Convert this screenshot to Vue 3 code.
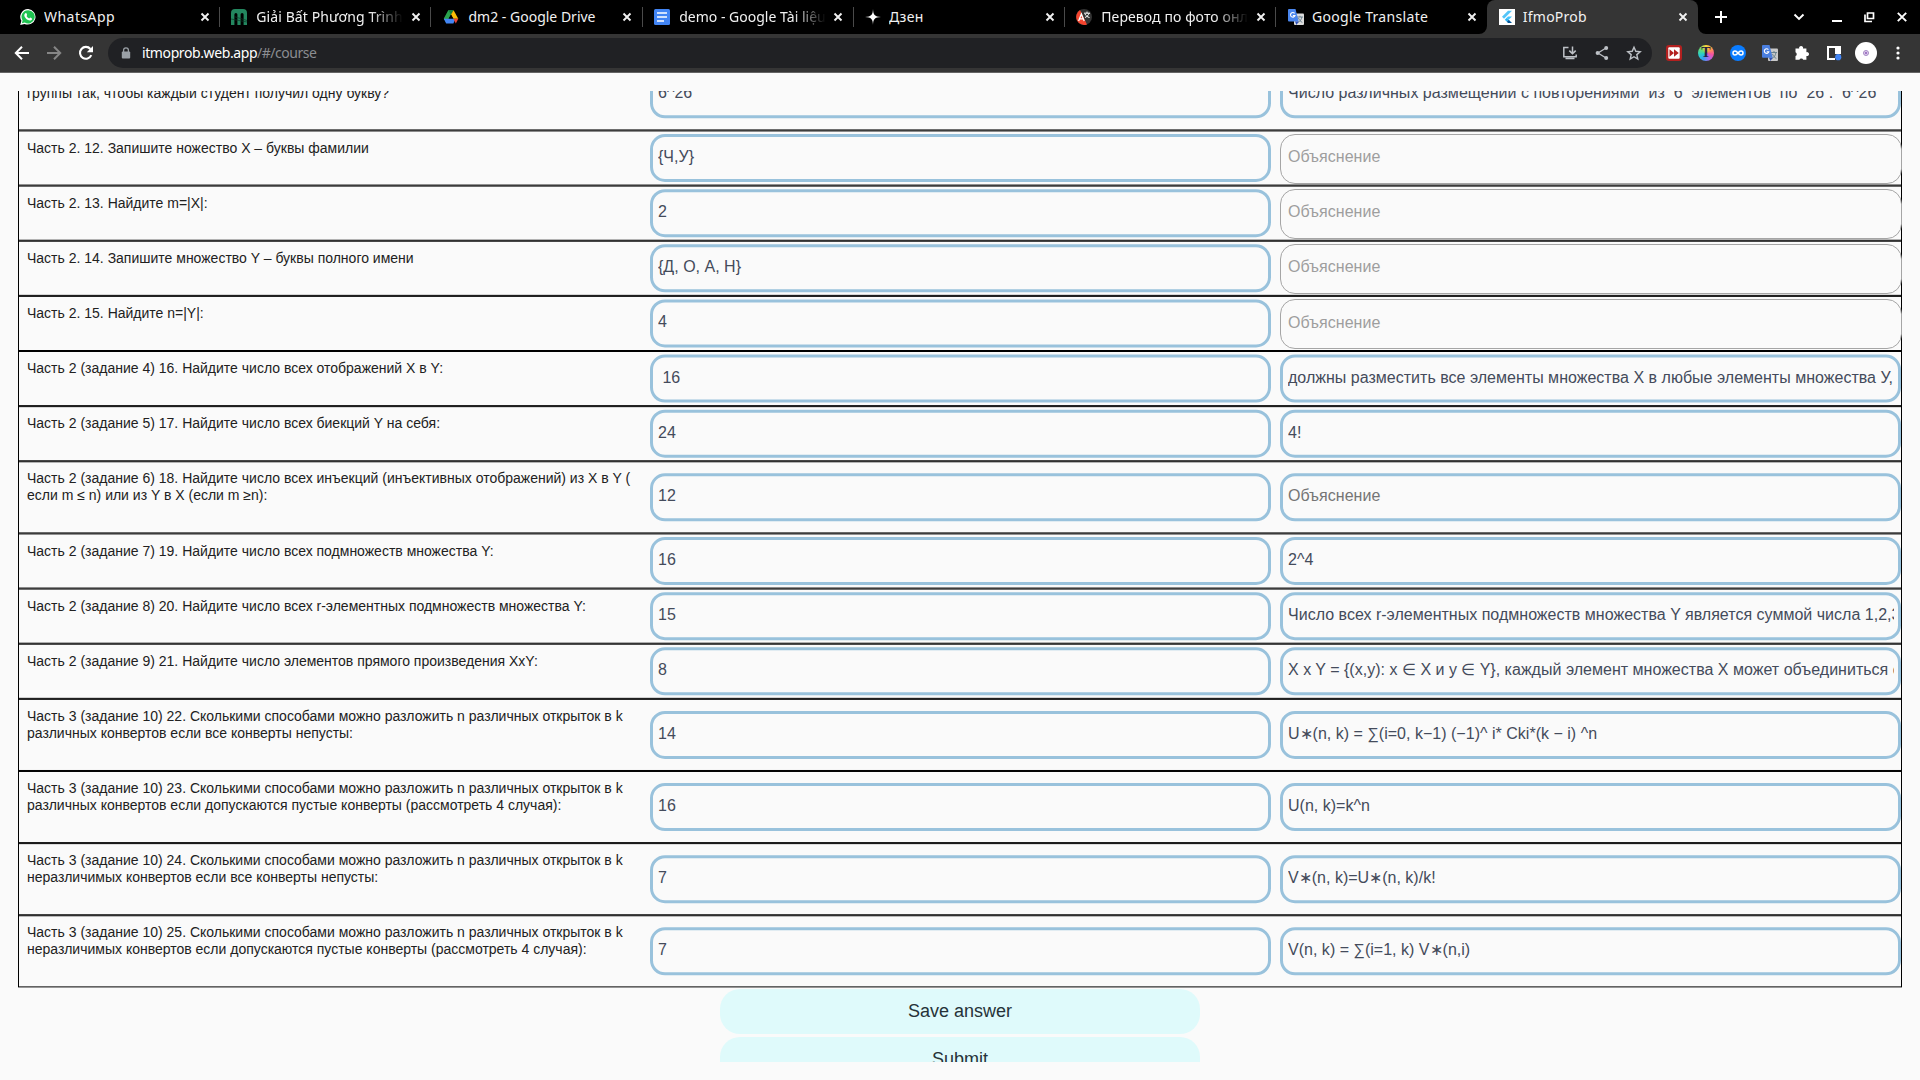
<script setup>
const tabs = [
  { icon: 'whatsapp', title: 'WhatsApp', spacing: 0.45 },
  { icon: 'mathway', title: 'Giải Bất Phương Trình', spacing: 0.1, indent: 1 },
  { icon: 'drive', title: 'dm2 - Google Drive', spacing: 0, indent: 2 },
  { icon: 'docs', title: 'demo - Google Tài liệu', spacing: 0, indent: 1.5 },
  { icon: 'zen', title: 'Дзен', spacing: 0.35 },
  { icon: 'photo', title: 'Перевод по фото онлайн', spacing: 0.1, indent: 1 },
  { icon: 'translate', title: 'Google Translate', spacing: 0.32, indent: 0.5 },
  { icon: 'flutter', title: 'IfmoProb', spacing: 0.25, active: true },
]

const SINGLE = 55.14
const DOUBLE = 72.14
const FIELD = 48

const items = [
  { q: '\u00a0\nгруппы так, чтобы каждый студент получил одну букву?', a: '6^26', e: 'Число различных размещений с повторениями  из  6  элементов  по  26 :  6^26', tall: true },
  { q: 'Часть 2. 12. Запишите ножество X – буквы фамилии', a: '{Ч,У}' },
  { q: 'Часть 2. 13. Найдите m=|X|:', a: '2' },
  { q: 'Часть 2. 14. Запишите множество Y – буквы полного имени', a: '{Д, О, А, Н}' },
  { q: 'Часть 2. 15. Найдите n=|Y|:', a: '4' },
  { q: 'Часть 2 (задание 4) 16. Найдите число всех отображений X в Y:', a: ' 16', e: 'должны разместить все элементы множества X в любые элементы множества У,' },
  { q: 'Часть 2 (задание 5) 17. Найдите число всех биекций Y на себя:', a: '24', e: '4!' },
  { q: 'Часть 2 (задание 6) 18. Найдите число всех инъекций (инъективных отображений) из X в Y (\nесли m ≤ n) или из Y в X (если m ≥n):', a: '12', e: '', tall: true },
  { q: 'Часть 2 (задание 7) 19. Найдите число всех подмножеств множества Y:', a: '16', e: '2^4' },
  { q: 'Часть 2 (задание 8) 20. Найдите число всех r-элементных подмножеств множества Y:', a: '15', e: 'Число всех r-элементных подмножеств множества Y является суммой числа 1,2,3' },
  { q: 'Часть 2 (задание 9) 21. Найдите число элементов прямого произведения XxY:', a: '8', e: 'X x Y = {(x,y): x ∈ X и y ∈ Y}, каждый элемент множества X может объединиться с' },
  { q: 'Часть 3 (задание 10) 22. Сколькими способами можно разложить n различных открыток в k\nразличных конвертов если все конверты непусты:', a: '14', e: 'U∗(n, k) = ∑(i=0, k−1) (−1)^ i* Cki*(k − i) ^n', tall: true },
  { q: 'Часть 3 (задание 10) 23. Сколькими способами можно разложить n различных открыток в k\nразличных конвертов если допускаются пустые конверты (рассмотреть 4 случая):', a: '16', e: 'U(n, k)=k^n', tall: true },
  { q: 'Часть 3 (задание 10) 24. Сколькими способами можно разложить n различных открыток в k\nнеразличимых конвертов если все конверты непусты:', a: '7', e: 'V∗(n, k)=U∗(n, k)/k!', tall: true },
  { q: 'Часть 3 (задание 10) 25. Сколькими способами можно разложить n различных открыток в k\nнеразличимых конвертов если допускаются пустые конверты (рассмотреть 4 случая):', a: '7', e: 'V(n, k) = ∑(i=1, k) V∗(n,i)', tall: true },
]

// Rows have fractional heights: keep whole-pixel boxes and carry the remainder.
let y = 58.3
const rows = items.map((it, i) => {
  const h = it.tall ? DOUBLE : SINGLE
  const top = Math.round(y)
  const end = y + h
  const fieldTop = y + (h - FIELD) / 2
  const row = {
    ...it,
    height: Math.round(end) - top,
    textTop: Math.round(y + 22.2) - top - 13,
    fieldShift: +(fieldTop - top).toFixed(2),
    blankTop: Math.round(fieldTop) - top,
    blankPad: Math.round(y + 31.7) - Math.round(fieldTop) - 16,
    ruleY: +(end - Math.round(end) + 1).toFixed(2),
    last: i === items.length - 1,
  }
  y = end
  return row
})
</script>

<template>
  <div class="browser">
    <header class="tabstrip">
      <div v-for="(t, i) in tabs" :key="t.title" class="tab" :class="{ active: t.active }">
        <svg class="fav" viewBox="0 0 16 16">
          <g v-if="t.icon === 'whatsapp'">
            <path d="M8.2 0A7.8 7.8 0 0 0 1.4 11.8L0.2 16l4.3-1.1A7.8 7.8 0 1 0 8.2 0z" fill="#fff" />
            <path d="M8.2 1.2a6.6 6.6 0 0 0-5.6 10.2l-.8 2.9 3-.8A6.6 6.6 0 1 0 8.2 1.2z" fill="#1fc351" />
            <path d="M5.5 4.2c.5-.3 1 0 1.1.4l.5 1.3c.1.4-.6.8-.6 1.2.6 1.200 1.500 1.900 2.700 2.400.4 0 .8-1 1.200-.9l1.500.8c.4.3.1 1.300-.4 1.700-1.200.9-2.600.5-4-.3C5.800 9.800 4.500 8.100 4.300 6.500 4.200 5.500 4.800 4.500 5.500 4.200z" fill="#fff" />
          </g>
          <g v-else-if="t.icon === 'mathway'">
            <path d="M0 4a4 4 0 0 1 4-4h8a4 4 0 0 1 4 4v12h-3.400V5.500a1.500 1.500 0 0 0-3 0V16H6.400V5.500a1.500 1.500 0 0 0-3 0V16H0z" fill="#23875f" />
            <path d="M0 10l16 3M3 7.500l13 4" stroke="#0d3b29" stroke-width=".7" />
          </g>
          <g v-else-if="t.icon === 'drive'">
            <path d="M5.400 1.200h5L5 10.800.9 10.400z" fill="#1ea05a" />
            <path d="M5.400 1.200L.8 9.600l2.300 4L8 5.200z" fill="#2ba24c" />
            <path d="M5.400 1.200h5.200L8 5.600z" fill="#188038" />
            <path d="M10.600 1.200L15.300 9.800h-4.900L8 5.400z" fill="#fbbc04" />
            <path d="M8 5.600L5.600 9.800h4.800z" fill="#000" />
            <path d="M.8 9.800h11.600l-2 4.800H3.200z" fill="#4285f4" />
            <path d="M10.400 9.800h4.900l-2.500 4.600z" fill="#ea4335" />
          </g>
          <g v-else-if="t.icon === 'docs'">
            <rect width="16" height="16" rx="1.500" fill="#4285f4" />
            <path d="M3 4h10M3 8h10M3 12h7" stroke="#fff" stroke-width="1.700" />
          </g>
          <path v-else-if="t.icon === 'zen'" d="M8 0c.3 6 1.500 7.600 8 8-6.500.4-7.700 2-8 8-.3-6-1.500-7.600-8-8 6.500-.4 7.700-2 8-8z" fill="#fff" />
          <g v-else-if="t.icon === 'photo'">
            <circle cx="8" cy="8" r="8" fill="#333" />
            <path d="M4 1.100A8 8 0 0 0 11 15.400z" fill="#f4442e" />
            <path d="M2.600 12L5.400 5l2.800 7M3.600 9.800h3.600" fill="none" stroke="#fff" stroke-width="1.300" />
            <path d="M8 4.200h6M11 2.600v1.600M9 8.500c2-.8 3.600-2.500 4-4.300M9 5c.8 1.800 2.400 3 4.500 3.500" fill="none" stroke="#fff" stroke-width="1" />
          </g>
          <g v-else-if="t.icon === 'translate'">
            <rect x="6" y="4.500" width="10" height="11.500" rx="1" fill="#dcdcdc" />
            <path d="M9 8h6M12 6.800V8M9.800 13.500C12 12.500 13.500 10.500 13.800 8M10.500 9c.8 2 2 3.500 3.800 4.400" fill="none" stroke="#607988" stroke-width=".9" />
            <path d="M1 0h6.500l3.200 12.500H1a1 1 0 0 1-1-1V1a1 1 0 0 1 1-1z" fill="#4a86ee" />
            <path d="M7 12.500h3.700L8.500 16z" fill="#3051b8" />
            <path d="M6.600 4.400A2.300 2.300 0 1 0 7 6.600H4.900" fill="none" stroke="#fff" stroke-width="1.100" />
          </g>
          <g v-else>
            <rect width="16" height="16" fill="#fff" />
            <path d="M9 1.800h4L5 9.700 3 7.700z" fill="#54c5f8" />
            <path d="M9 7.500h4l-3.300 3.300-2-2z" fill="#40c4ff" />
            <path d="M5.800 10.800l2-2 2 2-2 2z" fill="#29b6f6" />
            <path d="M7.800 12.800l2-2L13 14H9z" fill="#01579b" />
          </g>
        </svg>
        <span class="title" :class="{ fade: t.title.length > 20 }" :style="{ letterSpacing: t.spacing + 'px', textIndent: (t.indent || 0) + 'px' }">{{ t.title }}</span>
        <svg class="close" viewBox="0 0 16 16"><path d="M4.500 4.500l7 7m0-7l-7 7" stroke="#f1f1f1" stroke-width="1.900" /></svg>
        <i v-if="i < 6" class="sep"></i>
        <template v-if="t.active">
          <svg class="foot left" viewBox="0 0 8 8"><path d="M8 0v8H0a8 8 0 0 0 8-8z" fill="#353535" /></svg>
          <svg class="foot right" viewBox="0 0 8 8"><path d="M0 0v8h8a8 8 0 0 1-8-8z" fill="#353535" /></svg>
        </template>
      </div>
      <svg class="plus" viewBox="0 0 16 16"><path d="M8 2v12M2 8h12" stroke="#fff" stroke-width="2" /></svg>
      <div class="window-controls">
        <svg viewBox="0 0 16 16"><path d="M3.500 5.500L8 10l4.500-4.500" fill="none" stroke="#fff" stroke-width="1.900" /></svg>
        <svg viewBox="0 0 16 16"><path d="M3 12h10" stroke="#fff" stroke-width="2" /></svg>
        <svg viewBox="0 0 16 16"><path d="M6.500 4h6v5.500h-6zM4 5.500v7h7" fill="none" stroke="#fff" stroke-width="1.700" /></svg>
        <svg viewBox="0 0 16 16"><path d="M3.800 3.800l8.400 8.400m0-8.400l-8.400 8.400" stroke="#fff" stroke-width="1.900" /></svg>
      </div>
    </header>

    <nav class="toolbar">
      <div class="nav-buttons">
        <svg viewBox="0 0 16 16"><path d="M15 8H2.500M8 1.800L1.800 8 8 14.200" fill="none" stroke="#fff" stroke-width="2" /></svg>
        <svg viewBox="0 0 16 16"><path d="M1 8h12.500M8 1.800L14.200 8 8 14.200" fill="none" stroke="#868686" stroke-width="2" /></svg>
        <svg viewBox="0 0 16 16"><path d="M13.300 10.200A5.900 5.900 0 1 1 12.400 4" fill="none" stroke="#fff" stroke-width="2.100" /><path d="M15 1v6.200H8.800z" fill="#fff" /></svg>
      </div>
      <div class="address">
        <svg class="lock" viewBox="0 0 10 12"><path d="M2.600 5V3.200a2.400 2.400 0 0 1 4.800 0V5" fill="none" stroke="#9aa0a6" stroke-width="1.300" /><rect x=".8" y="4.400" width="8.400" height="7.200" rx="1" fill="#9aa0a6" /></svg>
        <span class="url"><b>itmoprob.web.app</b><em>/#/course</em></span>
        <div class="address-actions">
          <svg viewBox="0 0 16 16"><path d="M6.500 2.500H1.800v9.300h12.400V9.500M3.500 13.600h9M10.500 1.500v7M7.300 5.600l3.200 3.200 3.200-3.200" fill="none" stroke="#bdc1c6" stroke-width="1.500" /></svg>
          <svg viewBox="0 0 16 16"><path d="M12 3L4 8l8 5" fill="none" stroke="#bdc1c6" stroke-width="1.300" /><circle cx="12.200" cy="3" r="2" fill="#bdc1c6" /><circle cx="3.600" cy="8" r="2" fill="#bdc1c6" /><circle cx="12.200" cy="13" r="2" fill="#bdc1c6" /></svg>
          <svg viewBox="0 0 16 16"><path d="M8 2.200l1.800 4.100 4.400.4-3.400 2.900 1 4.400L8 11.700 4.200 14l1-4.400L1.800 6.700l4.400-.4z" fill="none" stroke="#bdc1c6" stroke-width="1.400" /></svg>
        </div>
      </div>
      <div class="extensions">
        <svg viewBox="0 0 16 16"><rect width="16" height="16" rx="3" fill="#b3201f" /><rect x="2.300" y="2.300" width="11.400" height="11.400" rx="1" fill="#fff" /><path d="M3.500 4.300L8 8l-4.500 3.700zM8 4.300L12.800 8 8 11.700z" fill="#b3201f" /></svg>
        <i class="text-ext">T</i>
        <svg viewBox="0 0 16 16"><circle cx="8" cy="8" r="8" fill="#0a7cff" /><path d="M8 8C6.700 6.400 6 6 5 6a2 2 0 0 0 0 4c1 0 1.700-.4 3-2s2-2 3-2a2 2 0 0 1 0 4c-1 0-1.700-.4-3-2z" fill="none" stroke="#fff" stroke-width="1.500" /></svg>
        <svg viewBox="0 0 16 16"><rect x="6" y="3.500" width="10" height="12.500" rx="1" fill="#c9c9c9" /><path d="M9 7.500h6M12 6v1.500M9.800 13.500C12 12.500 13.500 10.500 13.800 8M10.500 9c.8 2 2 3.500 3.800 4.400" fill="none" stroke="#607988" stroke-width=".9" /><path d="M1 0h6.500l3.200 12.800H1a1 1 0 0 1-1-1V1a1 1 0 0 1 1-1z" fill="#4a7fe0" /><path d="M7 12.800h3.700L8.500 16z" fill="#3051b8" /><path d="M6.400 4.600A2.300 2.300 0 1 0 6.800 6.800H4.700" fill="none" stroke="#fff" stroke-width="1.100" /></svg>
        <svg viewBox="0 0 16 16"><path d="M1.500 3.600h3.700a2 2 0 1 1 3.800 0h3.400v3.600a2 2 0 1 1 0 3.800v3.800H9.200a2 2 0 0 0-3.800 0H1.500V11a2 2 0 0 0 0-3.700z" fill="#fff" /></svg>
        <svg viewBox="0 0 16 16"><path d="M1 1h14v14H1zM3 3v10h6V3z" fill="#fff" fill-rule="evenodd" /><rect x="9" y="9" width="7" height="7" fill="#353535" /><circle cx="12.200" cy="12.200" r="3.100" fill="#4285f4" /></svg>
        <svg class="avatar" viewBox="0 0 22 22"><circle cx="11" cy="11" r="11" fill="#fff" /><circle cx="11" cy="11" r="2.500" fill="#e0d0ee" stroke="#a68bc4" stroke-width="1" /><circle cx="11" cy="11" r="1" fill="#8e5ab8" /></svg>
        <svg viewBox="0 0 16 16"><circle cx="8" cy="3" r="1.600" fill="#fff" /><circle cx="8" cy="8" r="1.600" fill="#fff" /><circle cx="8" cy="13" r="1.600" fill="#fff" /></svg>
      </div>
    </nav>

    <main class="viewport">
      <section class="table">
        <div v-for="(r, i) in rows" :key="i" class="row" :style="{ height: r.height + 'px' }">
          <p class="question" :style="{ paddingTop: r.textTop + 'px' }">{{ r.q }}</p>
          <div class="field" :style="{ transform: `translateY(${r.fieldShift}px)` }">
            <span>{{ r.a }}</span>
          </div>
          <div v-if="r.e === undefined" class="field blank" :style="{ marginTop: r.blankTop + 'px', paddingTop: r.blankPad + 'px' }"><span>Объяснение</span></div>
          <div v-else class="field" :class="{ hint: !r.e }" :style="{ transform: `translateY(${r.fieldShift}px)` }">
            <span>{{ r.e || 'Объяснение' }}</span>
          </div>
          <svg class="rule" width="1884" height="4">
            <rect x="0" :y="r.ruleY" width="1884" height="1" />
            <rect v-if="!r.last" x="0" :y="r.ruleY + 1" width="1884" height="1" />
          </svg>
        </div>
      </section>
      <div class="actions">
        <button>Save answer</button>
        <button>Submit</button>
      </div>
    </main>
  </div>
</template>

<style>
body { background: #fafafa; overflow: hidden; }
</style>

<style scoped>
.browser {
  width: 1920px;
  height: 1080px;
  overflow: hidden;
  display: flex;
  flex-direction: column;
  background: #fafafa;
}
svg { display: block; }

.tabstrip {
  height: 34px;
  flex: none;
  display: flex;
  align-items: center;
  padding-left: 8px;
  background: #000;
}
.tab {
  position: relative;
  width: 211.25px;
  height: 34px;
  flex: none;
  box-sizing: border-box;
  padding-left: 12px;
  display: flex;
  align-items: center;
}
.tab.active {
  background: #353535;
  border-radius: 8px 8px 0 0;
}
.fav { width: 16px; height: 16px; margin-right: 8px; flex: none; }
.title {
  width: 148px;
  flex: none;
  overflow: hidden;
  white-space: nowrap;
  font: 14px/20px "Noto Sans", sans-serif;
  color: #f1f1f1;
}
.title.fade { mask-image: linear-gradient(90deg, #000 115px, transparent 148px); }
.close { width: 16px; height: 16px; margin-left: 4.500px; flex: none; }
.sep { width: 1px; height: 20px; margin-left: 6.500px; background: #4a4a4a; flex: none; }
.foot { position: absolute; bottom: 0; width: 8px; height: 8px; }
.foot.left { left: -8px; }
.foot.right { right: -8px; }
.plus { width: 16px; height: 16px; margin-left: 15px; }
.window-controls {
  margin-left: auto;
  display: flex;
  align-items: center;
  padding-right: 10px;
}
.window-controls svg { width: 16px; height: 16px; }
.window-controls svg + svg { margin-left: 17px; }
.window-controls svg:nth-child(2) { margin-left: 22px; }
.window-controls svg:nth-child(3) { margin-left: 16px; }

.toolbar {
  height: 39px;
  flex: none;
  box-sizing: border-box;
  display: flex;
  align-items: center;
  background: #353535;
  border-bottom: 1px solid #646464;
}
.nav-buttons { display: flex; gap: 16px; padding: 0 14px; }
.nav-buttons svg { width: 16px; height: 16px; }
.address {
  width: 1544px;
  height: 30px;
  flex: none;
  box-sizing: border-box;
  border-radius: 15px;
  background: #202124;
  display: flex;
  align-items: center;
  padding: 0 10px 0 13px;
}
.lock { width: 10px; height: 12px; margin-right: 11px; }
.url { font: 14px/20px "Noto Sans", sans-serif; white-space: nowrap; }
.url b { font-weight: 400; color: #fff; letter-spacing: -0.4px; }
.url em { font-style: normal; color: #8b8d91; letter-spacing: -0.5px; }
.address-actions { margin-left: auto; display: flex; gap: 16px; }
.address-actions svg { width: 16px; height: 16px; }
.extensions { display: flex; align-items: center; gap: 16px; margin-left: 14px; }
.extensions svg { width: 16px; height: 16px; flex: none; }
.extensions .avatar { width: 22px; height: 22px; margin: 0 -3px; }
.text-ext {
  width: 16px;
  height: 16px;
  border-radius: 50%;
  background: conic-gradient(#ffd83a, #ff9a4a, #f652a0, #a86bf0, #35a0f4, #2ad0c8, #6fdc6c, #ffd83a);
  color: #2a2140;
  text-align: center;
  font: bold 14px/16px "Liberation Serif", serif;
}

.viewport {
  height: 971px;
  margin-top: 18px;
  flex: none;
  overflow: hidden;
  padding: 0 18px;
}
.table {
  margin-top: -33px;
  border: solid #000;
  border-width: 0 1px;
}
.row {
  position: relative;
  display: flex;
  align-items: flex-start;
}
.question {
  width: 631px;
  flex: none;
  box-sizing: border-box;
  margin: 0;
  padding-left: 8px;
  white-space: pre-line;
  font: 14px/17px "Liberation Sans", Arial, sans-serif;
  color: #212121;
}
.field {
  width: 621px;
  height: 48px;
  flex: none;
  box-sizing: border-box;
  padding: 10px 4px 0 5px;
  border: 3px solid #99c2dc;
  border-radius: 15px;
  font: 16px/20px "Liberation Sans", Arial, sans-serif;
  letter-spacing: 0.015px;
  color: #444b5b;
}
.field + .field { margin-left: 9px; }
.field span {
  display: block;
  height: 24px;
  overflow: hidden;
  white-space: pre;
}
.field.hint { color: #757575; }
.field.blank {
  position: relative;
  width: 622px;
  height: 50px;
  margin-right: -1px;
  padding: 0 7px;
  border: 1px solid #a5a5a5;
  color: #9e9e9e;
}
.rule { position: absolute; left: -1px; bottom: -2px; z-index: 1; }

.actions {
  width: 480px;
  margin: 2px auto 0;
  display: flex;
  flex-direction: column;
  gap: 3px;
}
.actions button {
  height: 45px;
  border: 0;
  padding: 0 0 1px;
  border-radius: 20px;
  background: #dffafb;
  color: #263238;
  font: 18px/22px "Liberation Sans", Arial, sans-serif;
}
</style>
